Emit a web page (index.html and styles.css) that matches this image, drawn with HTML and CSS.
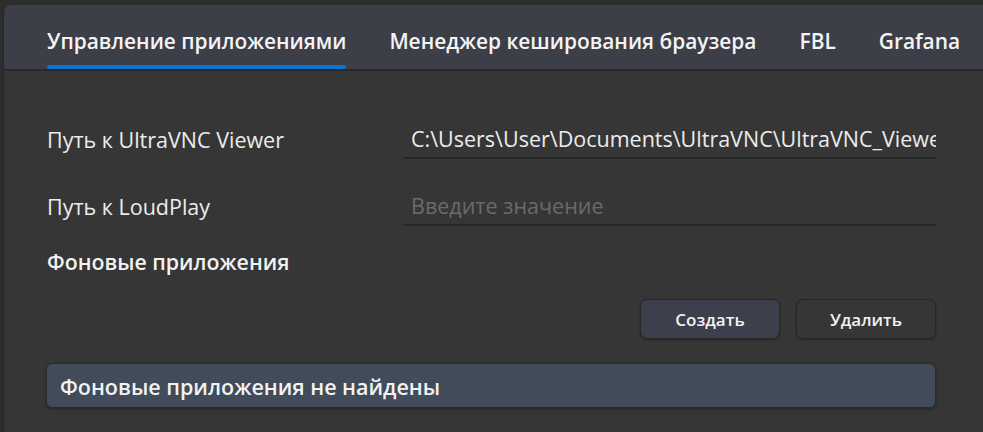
FILE: index.html
```html
<!DOCTYPE html>
<html lang="ru">
<head>
<meta charset="utf-8">
<link rel="stylesheet" href="styles.css">
</head>
<body>
<div class="window">
  <nav class="tabs">
    <div class="tab active">Управление приложениями</div>
    <div class="tab">Менеджер кеширования браузера</div>
    <div class="tab">FBL</div>
    <div class="tab">Grafana</div>
  </nav>
  <main class="content">
    <div class="field">
      <label class="label">Путь к UltraVNC Viewer</label>
      <div class="input"><span class="value">C:\Users\User\Documents\UltraVNC\UltraVNC_Viewer.exe</span></div>
    </div>
    <div class="field">
      <label class="label">Путь к LoudPlay</label>
      <div class="input"><span class="placeholder">Введите значение</span></div>
    </div>
    <h2 class="section">Фоновые приложения</h2>
    <div class="actions">
      <button class="btn primary">Создать</button>
      <button class="btn">Удалить</button>
    </div>
    <div class="empty">Фоновые приложения не найдены</div>
  </main>
</div>
</body>
</html>
```
FILE: styles.css
```css
* { box-sizing: border-box; }
html, body { margin: 0; height: 100%; }
body {
  background: #2e2e2e;
  font-family: "Open Sans", "Noto Sans", sans-serif;
  color: #f2f2f2;
  padding: 5px 0 0 3px;
  overflow: hidden;
}
.window {
  height: 100%;
  background: #363636;
  border-left: 1px solid #262626;
  border-top-left-radius: 8px;
  overflow: hidden;
}
.tabs {
  display: flex;
  height: 66px;
  background: #3c3e48;
  border-bottom: 2px solid #292929;
  padding-left: 43px;
  gap: 43px;
}
.tab {
  font-size: 20.9px;
  font-weight: 600;
  line-height: 56px;
  padding-top: 8px;
  color: #f4f4f4;
  position: relative;
  white-space: nowrap;
}
.tab.active::after {
  content: "";
  position: absolute;
  left: 0; right: 0; bottom: 0;
  height: 4px;
  background: #0a74d6;
  border-radius: 2px;
}
.content {
  padding: 44px 47px 0 43px;
  width: 979px;
}
.field {
  display: flex;
  align-items: center;
  height: 44px;
  margin-bottom: 23px;
}
.label {
  width: 356px;
  font-size: 21.5px;
  color: #ececec;
  padding-top: 4px;
}
.input {
  flex: 1;
  height: 44px;
  border-bottom: 2px solid #272727;
  padding: 4px 0 0 8px;
  display: flex;
  align-items: center;
  overflow: hidden;
  white-space: nowrap;
  font-size: 21.5px;
}
.value { color: #ececec; }
.placeholder { color: #6a6a6a; }
.section {
  margin: 5px 0 0;
  font-size: 21.3px;
  font-weight: 600;
  line-height: 26px;
}
.actions {
  display: flex;
  justify-content: flex-end;
  gap: 16px;
  margin-top: 24px;
}
.btn {
  width: 140px;
  height: 40px;
  border-radius: 7px;
  border: 1px solid #272727;
  background: #363636;
  color: #f2f2f2;
  font-family: inherit;
  font-size: 17px;
  font-weight: 600;
  box-shadow: 0 1px 2px rgba(0,0,0,0.3);
}
.btn.primary { background: #3d3f4c; }
.empty {
  margin-top: 24px;
  margin-left: -1px;
  height: 45px;
  background: #414b5a;
  border: 1px solid #2a2a2a;
  border-radius: 6px;
  padding: 2px 0 0 13px;
  display: flex;
  align-items: center;
  font-size: 21.5px;
  font-weight: 600;
  box-shadow: 0 1px 3px rgba(0,0,0,0.35);
}
```
